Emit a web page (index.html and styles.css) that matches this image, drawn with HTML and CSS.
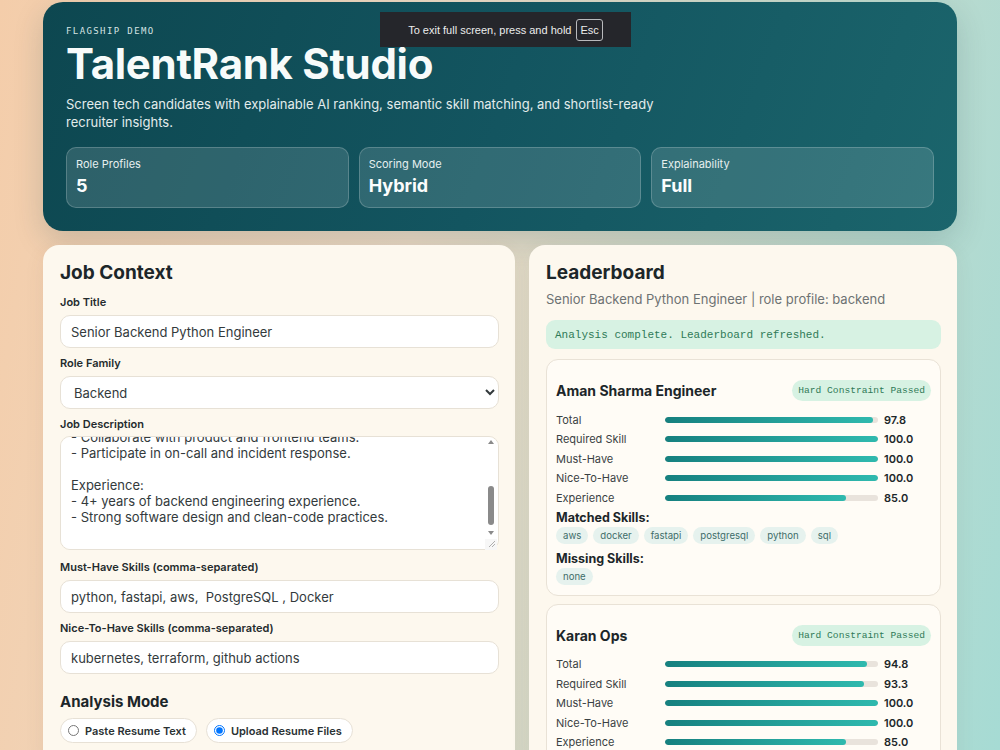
FILE: index.html
```html
<!DOCTYPE html>
<html lang="en">

<head>
  <meta charset="UTF-8">
  <meta name="viewport" content="width=device-width, initial-scale=1.0">
  <title>TalentRank Studio</title>
  <link rel="stylesheet" href="styles.css">
</head>

<body>
  <div class="page">
    <header class="hero">
      <div class="eyebrow">FLAGSHIP DEMO</div>
      <h1>TalentRank Studio</h1>
      <p class="lede">Screen tech candidates with explainable AI ranking, semantic skill matching, and shortlist-ready recruiter insights.</p>
      <div class="stats">
        <div class="stat">
          <div class="stat-label">Role Profiles</div>
          <div class="stat-value">5</div>
        </div>
        <div class="stat">
          <div class="stat-label">Scoring Mode</div>
          <div class="stat-value">Hybrid</div>
        </div>
        <div class="stat">
          <div class="stat-label">Explainability</div>
          <div class="stat-value">Full</div>
        </div>
      </div>
    </header>

    <main class="grid">
      <section class="panel">
        <h2>Job Context</h2>
        <div class="fields">
          <div class="field">
            <label>Job Title</label>
            <input class="ctl" type="text" value="Senior Backend Python Engineer">
          </div>
          <div class="field">
            <label>Role Family</label>
            <select class="ctl select">
              <option>Backend</option>
              <option>Frontend</option>
              <option>Data</option>
              <option>DevOps</option>
              <option>ML</option>
            </select>
          </div>
          <div class="field">
            <label>Job Description</label>
            <div class="area-wrap">
              <textarea class="ctl area" id="jd">We are hiring a Senior Backend Python Engineer.

Responsibilities:
- Design and build scalable REST APIs with FastAPI.
- Own PostgreSQL schemas, migrations and query performance.
- Write SQL for reporting and analytics endpoints.
- Deploy and operate services on AWS using Docker.
- Collaborate with product and frontend teams.
- Participate in on-call and incident response.

Experience:
- 4+ years of backend engineering experience.
- Strong software design and clean-code practices.
</textarea>
              <!-- scrollbar drawn by hand, the screenshot browser hides native ones -->
              <svg class="scroll" width="12" height="114" viewBox="0 0 12 114">
                <path d="M6 4 L9 8 L3 8 Z" fill="#8a8a8a" />
                <rect x="3" y="50" width="6" height="39" rx="3" fill="#8a8a8a" />
                <path d="M3 95 L9 95 L6 99 Z" fill="#8a8a8a" />
                <rect x="0" y="103" width="12" height="11" fill="#f7f7f7" />
                <path d="M4 111 L10 105 M7 111 L10 108" stroke="#9a9a9a" stroke-width="0.8" />
              </svg>
            </div>
          </div>
          <div class="field">
            <label>Must-Have Skills (comma-separated)</label>
            <input class="ctl" type="text" value="python, fastapi, aws,  PostgreSQL , Docker">
          </div>
          <div class="field">
            <label>Nice-To-Have Skills (comma-separated)</label>
            <input class="ctl" type="text" value="kubernetes, terraform, github actions">
          </div>
        </div>
        <h3>Analysis Mode</h3>
        <div class="modes">
          <label class="mode"><input type="radio" name="mode"> Paste Resume Text</label>
          <label class="mode"><input type="radio" name="mode" checked> Upload Resume Files</label>
        </div>
      </section>

      <section class="panel">
        <h2>Leaderboard</h2>
        <p class="sub">Senior Backend Python Engineer | role profile: backend</p>
        <div class="status">Analysis complete. Leaderboard refreshed.</div>

        <div class="cand">
          <div class="cand-head">
            <span class="cand-name">Aman Sharma Engineer</span>
            <span class="badge">Hard Constraint Passed</span>
          </div>
          <div class="scores">
            <span class="s-label">Total</span><span class="bar"><i style="width: 97.8%"></i></span><span class="s-val">97.8</span>
            <span class="s-label">Required Skill</span><span class="bar"><i style="width: 100%"></i></span><span class="s-val">100.0</span>
            <span class="s-label">Must-Have</span><span class="bar"><i style="width: 100%"></i></span><span class="s-val">100.0</span>
            <span class="s-label">Nice-To-Have</span><span class="bar"><i style="width: 100%"></i></span><span class="s-val">100.0</span>
            <span class="s-label">Experience</span><span class="bar"><i style="width: 85%"></i></span><span class="s-val">85.0</span>
          </div>
          <div class="skill-head">Matched Skills:</div>
          <div class="chips">
            <span class="chip">aws</span>
            <span class="chip">docker</span>
            <span class="chip">fastapi</span>
            <span class="chip">postgresql</span>
            <span class="chip">python</span>
            <span class="chip">sql</span>
          </div>
          <div class="skill-head">Missing Skills:</div>
          <div class="chips">
            <span class="chip">none</span>
          </div>
        </div>

        <div class="cand">
          <div class="cand-head">
            <span class="cand-name">Karan Ops</span>
            <span class="badge">Hard Constraint Passed</span>
          </div>
          <div class="scores">
            <span class="s-label">Total</span><span class="bar"><i style="width: 94.8%"></i></span><span class="s-val">94.8</span>
            <span class="s-label">Required Skill</span><span class="bar"><i style="width: 93.3%"></i></span><span class="s-val">93.3</span>
            <span class="s-label">Must-Have</span><span class="bar"><i style="width: 100%"></i></span><span class="s-val">100.0</span>
            <span class="s-label">Nice-To-Have</span><span class="bar"><i style="width: 100%"></i></span><span class="s-val">100.0</span>
            <span class="s-label">Experience</span><span class="bar"><i style="width: 85%"></i></span><span class="s-val">85.0</span>
          </div>
          <div class="skill-head">Matched Skills:</div>
          <div class="chips">
            <span class="chip">aws</span>
            <span class="chip">docker</span>
            <span class="chip">python</span>
          </div>
        </div>
      </section>
    </main>
  </div>

  <div class="fs-notice">To exit full screen, press and hold <span class="key">Esc</span></div>

  <script>
    const jd = document.getElementById('jd')
    jd.scrollTop = jd.scrollHeight
  </script>
</body>

</html>
```

FILE: styles.css
```css
* {
  box-sizing: border-box;
}

html,
body {
  height: 100%;
}

body {
  margin: 0;
  font-family: Inter, "Noto Sans", sans-serif;
  color: #1d2a2e;
  background: linear-gradient(100deg, #f4cdaa 0%, #eddac4 40%, #d4d9c8 60%, #a6dbd4 100%);
  overflow: hidden;
}

.page {
  width: 914px;
  margin: 0 auto;
  padding-top: 2px;
}

.hero {
  background: linear-gradient(110deg, #0d4750 0%, #135560 50%, #1b656c 100%);
  border-radius: 20px;
  padding: 22px 23px 23px;
  color: #f3f7f6;
  box-shadow: 0 10px 30px rgba(20, 60, 70, 0.18);
}

.eyebrow {
  font-family: "DejaVu Sans Mono", monospace;
  font-size: 9px;
  line-height: 14px;
  letter-spacing: 1.4px;
  color: #d5e3e3;
}

.hero h1 {
  margin: 4px 0 0;
  font-size: 42px;
  line-height: 44px;
  font-weight: 700;
  letter-spacing: -0.3px;
  color: #f7fbfa;
}

.lede {
  margin: 9px 0 0;
  width: 620px;
  font-size: 13px;
  line-height: 18px;
  color: #e2ecec;
}

.stats {
  margin-top: 16px;
  display: grid;
  grid-template-columns: repeat(3, 1fr);
  gap: 10px;
}

.stat {
  height: 61px;
  padding: 9px 9px;
  border-radius: 10px;
  background: rgba(255, 255, 255, 0.13);
  border: 1px solid rgba(255, 255, 255, 0.2);
}

.stat-label {
  font-size: 11px;
  line-height: 14px;
  color: #e6efef;
}

.stat-value {
  margin-top: 3px;
  font-size: 18px;
  line-height: 24px;
  font-weight: 700;
  color: #fbfdfd;
}

.grid {
  margin-top: 14px;
  display: grid;
  grid-template-columns: 472px 1fr;
  gap: 14px;
  align-items: start;
}

.panel {
  background: #fdf8ee;
  border-radius: 16px;
  padding: 16px 16px 20px 17px;
  min-height: 520px;
  box-shadow: 0 6px 20px rgba(90, 80, 60, 0.08);
}

.panel h2 {
  margin: 0;
  font-size: 19px;
  line-height: 24px;
  font-weight: 700;
  color: #1c2629;
}

.fields {
  margin-top: 10px;
  display: flex;
  flex-direction: column;
  gap: 8px;
}

.field label {
  display: block;
  margin-bottom: 6px;
  font-size: 11px;
  line-height: 14px;
  font-weight: 600;
  color: #242b2d;
}

.ctl {
  display: block;
  width: 100%;
  height: 33px;
  padding: 0 10px;
  border: 1px solid #e7e1d6;
  border-radius: 10px;
  background: #fff;
  font-family: Inter, "Noto Sans", sans-serif;
  font-size: 13px;
  color: #333a3c;
  outline: none;
}

.select {
  padding-left: 9px;
}

.area-wrap {
  position: relative;
  margin-top: -1px;
}

.area {
  height: 114px;
  padding: 5px 14px 8px 10px;
  line-height: 16px;
  resize: none;
  margin-bottom: 2px;
}

.scroll {
  position: absolute;
  top: 0;
  right: 2px;
  pointer-events: none;
}

.panel h3 {
  margin: 18px 0 0;
  font-size: 15px;
  line-height: 20px;
  font-weight: 700;
  color: #1c2629;
}

.modes {
  margin-top: 6px;
  display: flex;
  gap: 9px;
}

.mode {
  display: flex;
  align-items: center;
  gap: 6px;
  height: 25px;
  padding: 0 10px 0 7px;
  border: 1px solid #e7e1d6;
  border-radius: 999px;
  background: #fff;
  font-size: 11px;
  font-weight: 600;
  color: #2a3133;
}

.mode input {
  margin: 0;
  width: 11px;
  height: 11px;
}

.sub {
  margin: 5px 0 0;
  font-size: 13px;
  line-height: 18px;
  color: #6d7273;
}

.status {
  margin-top: 12px;
  height: 29px;
  padding: 0 9px;
  display: flex;
  align-items: center;
  border-radius: 9px;
  background: #d7f2e3;
  font-family: "Liberation Mono", monospace;
  font-size: 11px;
  color: #2f7a57;
}

.cand {
  margin-top: 10px;
  padding: 20px 9px 10px;
  border: 1px solid #e9e2d6;
  border-radius: 12px;
  background: #fffcf6;
}

.cand + .cand {
  margin-top: 8px;
}

.cand-head {
  display: flex;
  align-items: center;
  justify-content: space-between;
  height: 21px;
}

.cand-name {
  font-size: 14px;
  font-weight: 700;
  color: #1c2629;
}

.badge {
  height: 21px;
  padding: 0 6px;
  display: flex;
  align-items: center;
  border-radius: 999px;
  background: #d7f2e3;
  font-family: "Liberation Mono", monospace;
  font-size: 9.6px;
  color: #2f7a57;
}

.scores {
  margin-top: 9px;
  display: grid;
  grid-template-columns: 103px 1fr 47px;
  column-gap: 6px;
  grid-auto-rows: 19.5px;
  align-items: center;
}

.s-label {
  font-size: 11px;
  color: #3a4143;
}

.s-val {
  font-size: 11px;
  font-weight: 600;
  color: #1c2629;
}

.bar {
  display: block;
  height: 6px;
  border-radius: 999px;
  background: #e9e3dc;
  overflow: hidden;
}

.bar i {
  display: block;
  height: 100%;
  border-radius: 999px;
  background: linear-gradient(90deg, #16807f, #2fb9ae);
}

.skill-head {
  margin-top: 2px;
  font-size: 12.5px;
  line-height: 16px;
  font-weight: 700;
  color: #1c2629;
}

.chips + .skill-head {
  margin-top: 7px;
}

.chips {
  margin-top: 1px;
  display: flex;
  flex-wrap: wrap;
  gap: 5px;
}

.chip {
  height: 17px;
  padding: 0 7px;
  display: flex;
  align-items: center;
  border-radius: 999px;
  background: #e6f2ee;
  font-size: 9.6px;
  color: #3e6d69;
}

.fs-notice {
  position: fixed;
  top: 12px;
  left: 380px;
  width: 251px;
  height: 35px;
  display: flex;
  align-items: center;
  justify-content: center;
  gap: 5px;
  background: #25262b;
  font-family: "Liberation Sans", Arial, sans-serif;
  font-size: 11px;
  color: #eceded;
}

.key {
  padding: 4px 3px;
  border: 1px solid #b9babd;
  border-radius: 3px;
  font-size: 11px;
}
```
